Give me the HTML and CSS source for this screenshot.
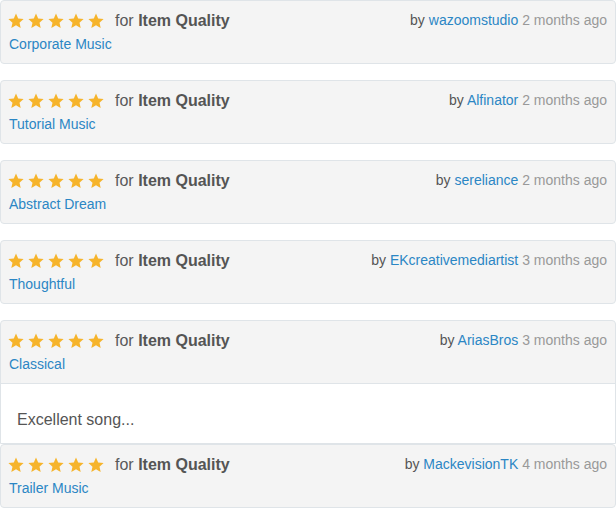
FILE: index.html
```html
<!DOCTYPE html>
<html>
<head>
<meta charset="utf-8">
<link rel="stylesheet" href="styles.css">
</head>
<body>
<svg width="0" height="0" class="defs">
  <defs>
    <symbol id="star" viewBox="0 0 16 16">
      <polygon points="8,0.6 10.2,5.6 15.6,6.1 11.5,9.7 12.7,15 8,12.2 3.3,15 4.5,9.7 0.4,6.1 5.8,5.6"/>
    </symbol>
  </defs>
</svg>
<div class="list">
  <div class="review">
    <div class="head">
      <div class="left">
        <div class="rating"><span class="stars"><svg><use href="#star"/></svg><svg><use href="#star"/></svg><svg><use href="#star"/></svg><svg><use href="#star"/></svg><svg><use href="#star"/></svg></span><span class="for">for <b>Item Quality</b></span></div>
        <a class="cat">Corporate Music</a>
      </div>
      <div class="meta">by <a class="user">wazoomstudio</a> <span class="time">2 months ago</span></div>
    </div>
  </div>
  <div class="review">
    <div class="head">
      <div class="left">
        <div class="rating"><span class="stars"><svg><use href="#star"/></svg><svg><use href="#star"/></svg><svg><use href="#star"/></svg><svg><use href="#star"/></svg><svg><use href="#star"/></svg></span><span class="for">for <b>Item Quality</b></span></div>
        <a class="cat">Tutorial Music</a>
      </div>
      <div class="meta">by <a class="user">Alfinator</a> <span class="time">2 months ago</span></div>
    </div>
  </div>
  <div class="review">
    <div class="head">
      <div class="left">
        <div class="rating"><span class="stars"><svg><use href="#star"/></svg><svg><use href="#star"/></svg><svg><use href="#star"/></svg><svg><use href="#star"/></svg><svg><use href="#star"/></svg></span><span class="for">for <b>Item Quality</b></span></div>
        <a class="cat">Abstract Dream</a>
      </div>
      <div class="meta">by <a class="user">sereliance</a> <span class="time">2 months ago</span></div>
    </div>
  </div>
  <div class="review">
    <div class="head">
      <div class="left">
        <div class="rating"><span class="stars"><svg><use href="#star"/></svg><svg><use href="#star"/></svg><svg><use href="#star"/></svg><svg><use href="#star"/></svg><svg><use href="#star"/></svg></span><span class="for">for <b>Item Quality</b></span></div>
        <a class="cat">Thoughtful</a>
      </div>
      <div class="meta">by <a class="user">EKcreativemediartist</a> <span class="time">3 months ago</span></div>
    </div>
  </div>
  <div class="review expanded">
    <div class="head">
      <div class="left">
        <div class="rating"><span class="stars"><svg><use href="#star"/></svg><svg><use href="#star"/></svg><svg><use href="#star"/></svg><svg><use href="#star"/></svg><svg><use href="#star"/></svg></span><span class="for">for <b>Item Quality</b></span></div>
        <a class="cat">Classical</a>
      </div>
      <div class="meta">by <a class="user">AriasBros</a> <span class="time">3 months ago</span></div>
    </div>
    <div class="body">Excellent song...</div>
  </div>
  <div class="review">
    <div class="head">
      <div class="left">
        <div class="rating"><span class="stars"><svg><use href="#star"/></svg><svg><use href="#star"/></svg><svg><use href="#star"/></svg><svg><use href="#star"/></svg><svg><use href="#star"/></svg></span><span class="for">for <b>Item Quality</b></span></div>
        <a class="cat">Trailer Music</a>
      </div>
      <div class="meta">by <a class="user">MackevisionTK</a> <span class="time">4 months ago</span></div>
    </div>
  </div>
</div>
</body>
</html>
```
FILE: styles.css
```css
* { box-sizing: border-box; }
html, body { margin: 0; padding: 0; background: #fff; }
body { font-family: "Liberation Sans", Arial, sans-serif; color: #555; }
.defs { position: absolute; width: 0; height: 0; }
.list { display: flex; flex-direction: column; gap: 16px; width: 616px; }
.review {
  border: 1px solid #dfe4e8;
  border-radius: 4px;
  background: #f4f4f4;
  overflow: hidden;
}
.review.expanded { margin-bottom: -16px; border-bottom-left-radius: 0; border-bottom-right-radius: 0; }
.head {
  display: flex;
  justify-content: space-between;
  align-items: flex-start;
  height: 62px;
  padding: 10px 8px 0 7px;
}
.expanded .head { border-bottom: 1px solid #dfe4e8; height: 63px; }
.left { display: flex; flex-direction: column; gap: 3px; }
.rating { display: flex; align-items: center; height: 20px; }
.stars { display: flex; gap: 4px; margin-right: 11px; }
.stars svg { width: 16px; height: 16px; fill: #f6b42b; display: block; }
.for { font-size: 16px; line-height: 20px; color: #595959; }
.for b { font-weight: bold; color: #555; }
.cat { font-size: 14px; line-height: 20px; color: #2b86c4; padding-left: 1px; }
.meta { font-size: 14px; line-height: 20px; margin-top: -1px; color: #555; }
.user { color: #2b86c4; }
.time { color: #999; }
.body {
  background: #fff;
  height: 59px;
  padding: 26px 16px 0 16px;
  font-size: 16px;
  line-height: 20px;
  color: #555;
}
```
